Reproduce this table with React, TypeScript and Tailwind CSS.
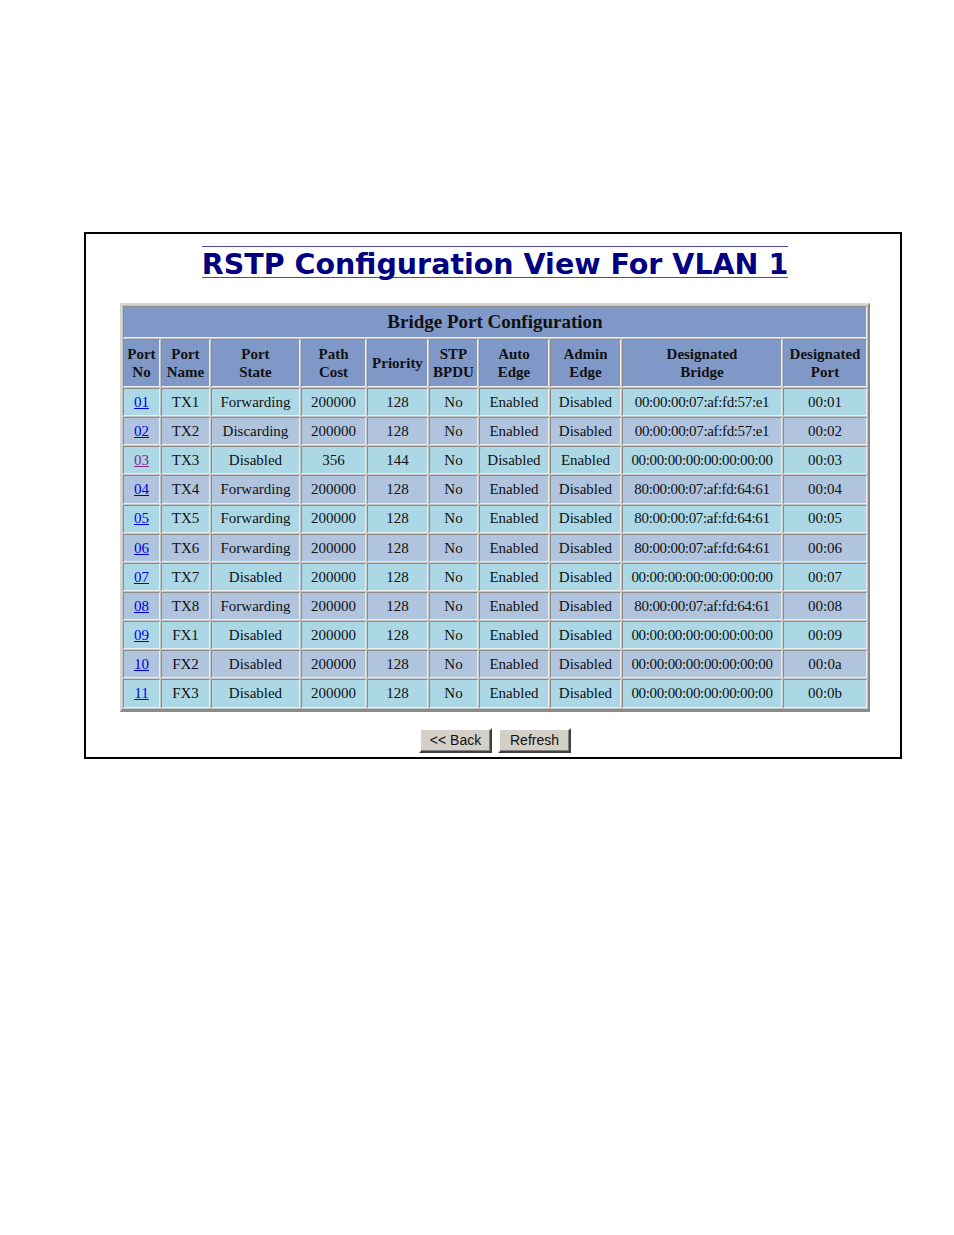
import React from "react";

const Z = "00:00:00:00:00:00:00:00";
const A = "00:00:00:07:af:fd:57:e1";
const B = "80:00:00:07:af:fd:64:61";

const rows: string[][] = [
  ["01", "TX1", "Forwarding", "200000", "128", "No", "Enabled", "Disabled", A, "00:01"],
  ["02", "TX2", "Discarding", "200000", "128", "No", "Enabled", "Disabled", A, "00:02"],
  ["03", "TX3", "Disabled", "356", "144", "No", "Disabled", "Enabled", Z, "00:03"],
  ["04", "TX4", "Forwarding", "200000", "128", "No", "Enabled", "Disabled", B, "00:04"],
  ["05", "TX5", "Forwarding", "200000", "128", "No", "Enabled", "Disabled", B, "00:05"],
  ["06", "TX6", "Forwarding", "200000", "128", "No", "Enabled", "Disabled", B, "00:06"],
  ["07", "TX7", "Disabled", "200000", "128", "No", "Enabled", "Disabled", Z, "00:07"],
  ["08", "TX8", "Forwarding", "200000", "128", "No", "Enabled", "Disabled", B, "00:08"],
  ["09", "FX1", "Disabled", "200000", "128", "No", "Enabled", "Disabled", Z, "00:09"],
  ["10", "FX2", "Disabled", "200000", "128", "No", "Enabled", "Disabled", Z, "00:0a"],
  ["11", "FX3", "Disabled", "200000", "128", "No", "Enabled", "Disabled", Z, "00:0b"],
];

const headers: string[][] = [
  ["Port", "No"],
  ["Port", "Name"],
  ["Port", "State"],
  ["Path", "Cost"],
  ["Priority"],
  ["STP", "BPDU"],
  ["Auto", "Edge"],
  ["Admin", "Edge"],
  ["Designated", "Bridge"],
  ["Designated", "Port"],
];

const colW = ["w-[37px]", "w-[49px]", "w-[89px]", "w-[65px]", "w-[61px]", "w-[49px]", "w-[70px]", "w-[71px]", "w-[160px]", "w-[84px]"];

const cell =
  "border border-solid border-t-[#8c8c8c] border-l-[#8c8c8c] border-b-[#eeeeee] border-r-[#eeeeee] p-0 text-center align-middle";

export default function App() {
  return (
    <div className="min-h-[1235px] w-[954px] bg-white pt-[232px] pl-[84px]">
      <div className="flex h-[527px] w-[818px] flex-col items-center border-2 border-black pl-[4px] pt-[12px]">
        <h1
          className="inline-block border-y border-[#4a4aa8] pt-[6px] text-[28.5px] leading-[24px] font-bold text-[#000080]"
          style={{ fontFamily: '"DejaVu Sans", Verdana, sans-serif' }}
        >
          RSTP Configuration View For VLAN 1
        </h1>
        <table
          className="mt-[25px] w-[750px] table-fixed border-separate border-spacing-[1px] border-2 border-b-[3px] border-solid border-t-[#d6d6d6] border-l-[#d6d6d6] border-b-[#8a8a8a] border-r-[#8a8a8a] bg-[#c4c4c4] text-[15px] text-[#111]"
          style={{ fontFamily: '"Liberation Serif", "Times New Roman", serif' }}
        >
          <colgroup>
            {colW.map((w, i) => (
              <col key={i} className={w} />
            ))}
          </colgroup>
          <thead>
            <tr className="h-[32px] bg-[#7f98c8]">
              <th colSpan={10} className={`${cell} text-[19px] font-bold`}>
                Bridge Port Configuration
              </th>
            </tr>
            <tr className="h-[48px] bg-[#7f98c8]">
              {headers.map((h, i) => (
                <th key={i} className={`${cell} font-bold leading-[18px]`}>
                  {h.map((l, j) => (
                    <div key={j}>{l}</div>
                  ))}
                </th>
              ))}
            </tr>
          </thead>
          <tbody>
            {rows.map((r, i) => (
              <tr key={i} className={`h-[28.15px] ${i % 2 === 0 ? "bg-[#acd8e6]" : "bg-[#b0c4de]"}`}>
                {r.map((v, j) => (
                  <td key={j} className={`${cell} ${j === 8 ? "tracking-[-0.35px]" : ""}`}>
                    {j === 0 ? (
                      <a href="#" className={`underline ${v === "03" ? "text-[#7a2b8b]" : "text-[#0000ee]"}`}>
                        {v}
                      </a>
                    ) : (
                      v
                    )}
                  </td>
                ))}
              </tr>
            ))}
          </tbody>
        </table>
        <div className="mt-[16px] flex gap-[6px]" style={{ fontFamily: '"Liberation Sans", Arial, sans-serif' }}>
          {["<< Back", "Refresh"].map((t) => (
            <button
              key={t}
              className="h-[25px] w-[73px] border-2 border-solid border-t-[#ffffff] border-l-[#ffffff] border-b-[#404040] border-r-[#404040] bg-[#d4d0c8] text-[14px] leading-none text-[#111] shadow-[inset_-1px_-1px_0_#808080]"
            >
              {t}
            </button>
          ))}
        </div>
      </div>
    </div>
  );
}
